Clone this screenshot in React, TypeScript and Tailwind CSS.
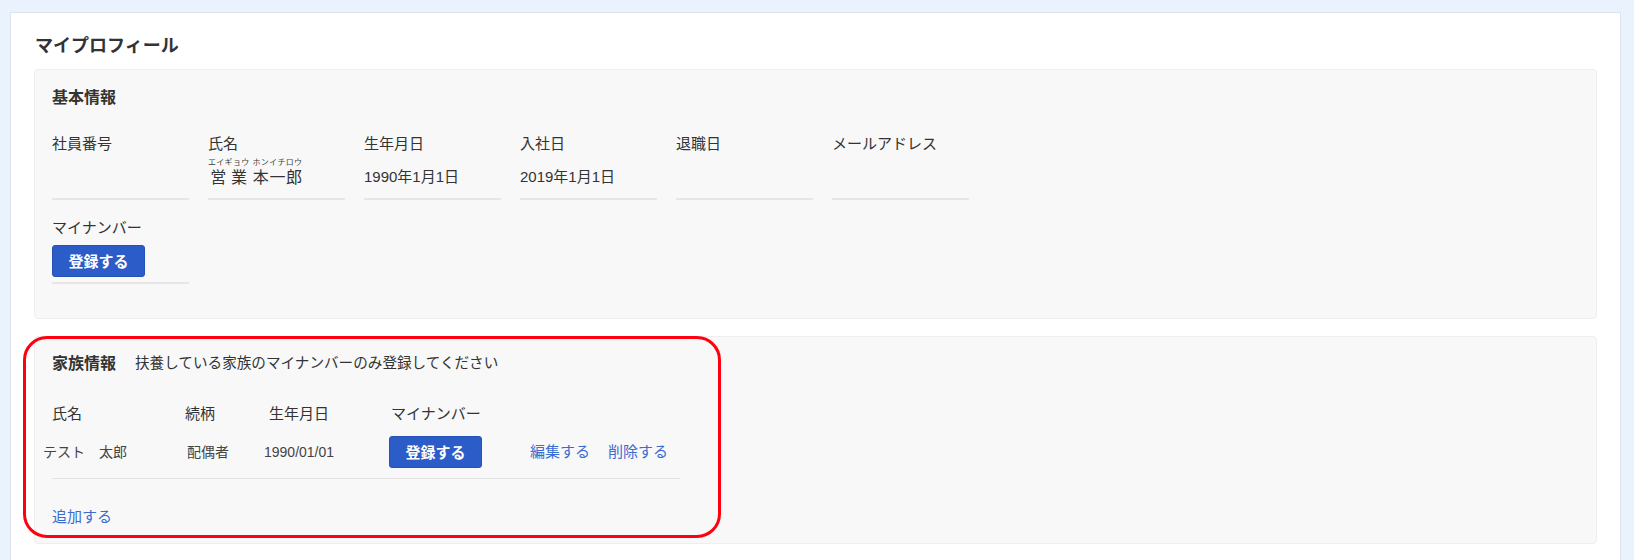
const fields = [
  { label: "社員番号", value: "" },
  { label: "氏名", value: "ruby" },
  { label: "生年月日", value: "1990年1月1日" },
  { label: "入社日", value: "2019年1月1日" },
  { label: "退職日", value: "" },
  { label: "メールアドレス", value: "" },
]

function RubyGroup({ rt, base }: { rt: string; base: string[] }) {
  return (
    <span className="inline-flex flex-col">
      <span className="text-[8px] leading-[9px] whitespace-nowrap text-center tracking-[0.3px] text-[#444]">
        {rt}
      </span>
      <span className="flex justify-around leading-[21px]">
        {base.map((c, i) => (
          <span key={i}>{c}</span>
        ))}
      </span>
    </span>
  )
}

function Field({ label, value }: { label: string; value: string }) {
  return (
    <div className="w-[137px] border-b-2 border-[#e6e6e6] pb-[10px]">
      <div className="text-[15px] leading-[22px] text-[#333]">{label}</div>
      <div className="mt-[11px] h-[22px] flex items-end text-[15px] leading-[22px] text-[#333]">
        {value === "ruby" ? (
          <div className="flex items-end gap-[3px] text-[16px]">
            <RubyGroup rt="エイギョウ" base={["営", "業"]} />
            <RubyGroup rt="ホンイチロウ" base={["本", "一", "郎"]} />
          </div>
        ) : (
          value
        )}
      </div>
    </div>
  )
}

function RegisterButton() {
  return (
    <button className="h-[32px] w-[93px] rounded-[3px] bg-[#2b5cc7] border border-[#2552b8] text-white text-[15px] font-bold leading-none">
      登録する
    </button>
  )
}

export default function App() {
  return (
    <main className="min-h-[560px] bg-[#eaf3fd] pt-[12px] pl-[10px] font-['Liberation_Sans','Noto_Sans_CJK_JP',sans-serif]">
      <div className="w-[1611px] min-h-[560px] bg-white border border-[#dde4ec] px-[23px] pt-[20px] pb-[24px]">

        <h1 className="text-[18px] leading-[26px] font-bold text-[#333] ml-[1px]">
          マイプロフィール
        </h1>

        {/* BASIC INFO */}

        <section className="mt-[10px] bg-[#f8f8f8] border border-[#eeeeee] rounded-[4px] px-[17px] pt-[16px] pb-[34px]">
          <h2 className="text-[16px] leading-[24px] font-bold text-[#333]">基本情報</h2>

          <div className="mt-[23px] flex gap-[19px]">
            {fields.map((f) => (
              <Field key={f.label} label={f.label} value={f.value} />
            ))}
          </div>

          <div className="mt-[17px] w-[137px] border-b-2 border-[#e6e6e6] pb-[5px]">
            <div className="text-[15px] leading-[22px] text-[#333]">マイナンバー</div>
            <div className="mt-[6px]">
              <RegisterButton />
            </div>
          </div>
        </section>

        {/* FAMILY INFO */}

        <section className="relative mt-[17px] bg-[#f8f8f8] border border-[#eeeeee] rounded-[4px] px-[17px] pt-[15px] pb-[15px]">
          <div className="flex items-center">
            <h2 className="text-[16px] leading-[24px] font-bold text-[#333]">家族情報</h2>
            <span className="ml-[19px] text-[14.6px] text-[#333]">
              扶養している家族のマイナンバーのみ登録してください
            </span>
          </div>

          <div className="mt-[27px] w-[628px] text-[15px] leading-[22px] text-[#333]">
            <div className="flex">
              <div className="w-[133px]">氏名</div>
              <div className="w-[84px]">続柄</div>
              <div className="w-[122px]">生年月日</div>
              <div>マイナンバー</div>
            </div>

            <div className="mt-[11px] flex items-center border-b border-[#e3e3e3] pb-[10px] text-[14px] text-[#444]">
              <div className="w-[133px] -ml-[9px]">
                テスト<span className="ml-[14px]">太郎</span>
              </div>
              <div className="w-[84px] ml-[11px]">配偶者</div>
              <div className="w-[122px] -ml-[7px]">1990/01/01</div>
              <div className="w-[141px] ml-[3px]">
                <RegisterButton />
              </div>
              <a className="w-[78px] text-[15px] text-[#3a6bd0]">編集する</a>
              <a className="text-[15px] text-[#3a6bd0]">削除する</a>
            </div>
          </div>

          <a className="mt-[27px] block text-[15px] leading-[22px] text-[#3a6bd0]">追加する</a>

          {/* highlight annotation */}
          <div className="absolute left-[-12px] top-[-1px] w-[698px] h-[202px] border-[3px] border-[#ff0010] rounded-[24px] pointer-events-none" />
        </section>

      </div>
    </main>
  )
}
